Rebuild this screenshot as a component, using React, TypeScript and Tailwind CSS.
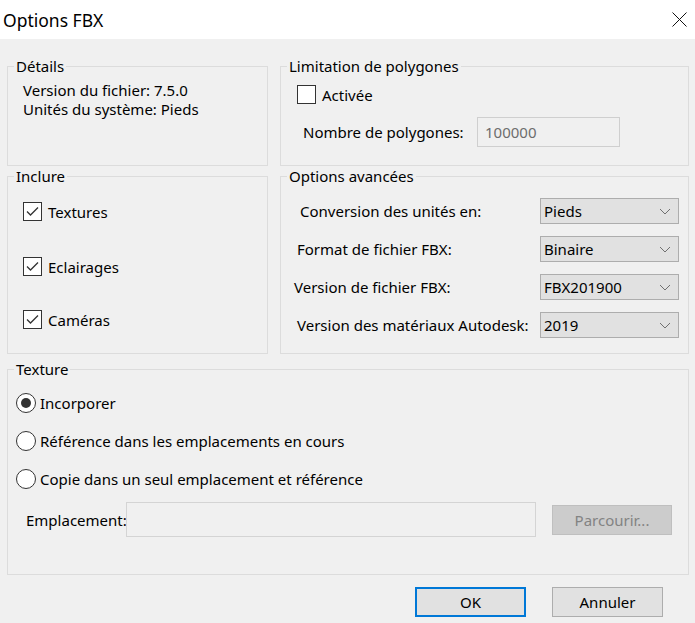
import React from "react";

function Group({ label, className, children }: { label: string; className?: string; children?: React.ReactNode }) {
  return (
    <fieldset className={"border border-[#dcdcdc] " + (className ?? "")}>
      <legend className="ml-[6px] px-[2px] leading-[20px]">{label}</legend>
      {children}
    </fieldset>
  );
}

function CheckBox({ checked }: { checked?: boolean }) {
  return (
    <span className="flex h-[19px] w-[19px] shrink-0 items-center justify-center border border-[#333333] bg-white">
      {checked && (
        <svg width="17" height="17" viewBox="0 0 17 17">
          <path d="M3 8.5 L6.5 12 L14 4.5" fill="none" stroke="#333333" strokeWidth="1.3" />
        </svg>
      )}
    </span>
  );
}

function Radio({ checked }: { checked?: boolean }) {
  return (
    <span className="flex h-[20px] w-[20px] shrink-0 items-center justify-center rounded-full border border-[#333333] bg-white">
      {checked && <span className="h-[10px] w-[10px] rounded-full bg-[#333333]" />}
    </span>
  );
}

function Select({ value }: { value: string }) {
  return (
    <div className="ml-auto mr-[9px] flex h-[26px] w-[139px] shrink-0 items-center justify-between border border-[#adadad] bg-[#e1e1e1] pl-[3px] pr-[7px] leading-[18px]">
      <span>{value}</span>
      <svg width="12" height="7" viewBox="0 0 12 7">
        <path d="M1 1 L6 6 L11 1" fill="none" stroke="#707070" strokeWidth="1" />
      </svg>
    </div>
  );
}

const advanced = [
  { label: "Conversion des unités en:", value: "Pieds", pad: "pl-[19px]" },
  { label: "Format de fichier FBX:", value: "Binaire", pad: "pl-[16px]" },
  { label: "Version de fichier FBX:", value: "FBX201900", pad: "pl-[13px]" },
  { label: "Version des matériaux Autodesk:", value: "2019", pad: "pl-[16px]" },
];

export default function App() {
  return (
    <div className="flex h-[623px] w-[695px] flex-col bg-[#f0f0f0] font-['Noto_Sans',sans-serif] text-[15px] text-black">
      {/* title bar */}
      <div className="flex h-[39px] shrink-0 items-center justify-between bg-white pl-[3px] pr-[8px]">
        <span className="text-[17.5px] leading-[24px]">Options FBX</span>
        <svg width="15" height="15" viewBox="0 0 15 15">
          <path d="M0.5 0.5 L14.5 14.5 M14.5 0.5 L0.5 14.5" stroke="#111111" strokeWidth="1" />
        </svg>
      </div>

      <div className="flex flex-col pl-[7px] pr-[6px] pt-[17px]">
        <div className="flex h-[110px] gap-[12px]">
          <Group label="Détails" className="w-[261px]">
            <div className="pl-[15px] pt-[5px] leading-[19px]">
              <div>Version du fichier: 7.5.0</div>
              <div>Unités du système: Pieds</div>
            </div>
          </Group>
          <Group label="Limitation de polygones" className="flex-1">
            <div className="flex flex-col">
              <div className="mt-[9px] flex items-center gap-[6px] pl-[16px] leading-[18px]">
                <CheckBox />
                <span>Activée</span>
              </div>
              <div className="mt-[13px] flex items-center pl-[22px] leading-[18px]">
                <span className="w-[174px] shrink-0">Nombre de polygones:</span>
                <div className="flex h-[30px] w-[143px] items-center border border-[#cfcfcf] bg-[#f0f0f0] pl-[7px] text-[#6d6d6d]">
                  100000
                </div>
              </div>
            </div>
          </Group>
        </div>

        <div className="flex h-[188px] gap-[12px]">
          <Group label="Inclure" className="w-[261px]">
            <div className="flex flex-col pl-[15px] leading-[18px]">
              <div className="mt-[16px] flex items-center gap-[6px]">
                <CheckBox checked />
                <span>Textures</span>
              </div>
              <div className="mt-[36px] flex items-center gap-[6px]">
                <CheckBox checked />
                <span>Eclairages</span>
              </div>
              <div className="mt-[34px] flex items-center gap-[6px]">
                <CheckBox checked />
                <span>Caméras</span>
              </div>
            </div>
          </Group>
          <Group label="Options avancées" className="flex-1">
            <div className="mt-[12px] flex flex-col gap-[12px]">
              {advanced.map((row) => (
                <div key={row.label} className={"flex items-center leading-[18px] " + row.pad}>
                  <span className="whitespace-nowrap">{row.label}</span>
                  <Select value={row.value} />
                </div>
              ))}
            </div>
          </Group>
        </div>

        <Group label="Texture" className="mt-[5px] h-[216px]">
          <div className="flex flex-col leading-[18px]">
            <div className="mt-[14px] flex items-center gap-[4px] pl-[8px]">
              <Radio checked />
              <span>Incorporer</span>
            </div>
            <div className="mt-[18px] flex items-center gap-[4px] pl-[8px]">
              <Radio />
              <span>Référence dans les emplacements en cours</span>
            </div>
            <div className="mt-[18px] flex items-center gap-[4px] pl-[8px]">
              <Radio />
              <span>Copie dans un seul emplacement et référence</span>
            </div>
            <div className="mt-[13px] flex items-center pl-[18px]">
              <span className="w-[100px] shrink-0 whitespace-nowrap">Emplacement:</span>
              <div className="h-[35px] w-[410px] shrink-0 border border-[#d4d4d4] bg-[#f0f0f0]" />
              <div className="ml-[16px] flex h-[30px] w-[120px] shrink-0 items-center justify-center border border-[#bfbfbf] bg-[#cccccc] text-[#838383]">
                Parcourir...
              </div>
            </div>
          </div>
        </Group>

        <div className="mt-[12px] flex justify-end gap-[26px] pr-[26px] leading-[18px]">
          <div className="flex h-[30px] w-[111px] items-center justify-center border-2 border-[#0078d7] bg-[#e1e1e1]">OK</div>
          <div className="flex h-[30px] w-[111px] items-center justify-center border border-[#adadad] bg-[#e1e1e1]">Annuler</div>
        </div>
      </div>
    </div>
  );
}
